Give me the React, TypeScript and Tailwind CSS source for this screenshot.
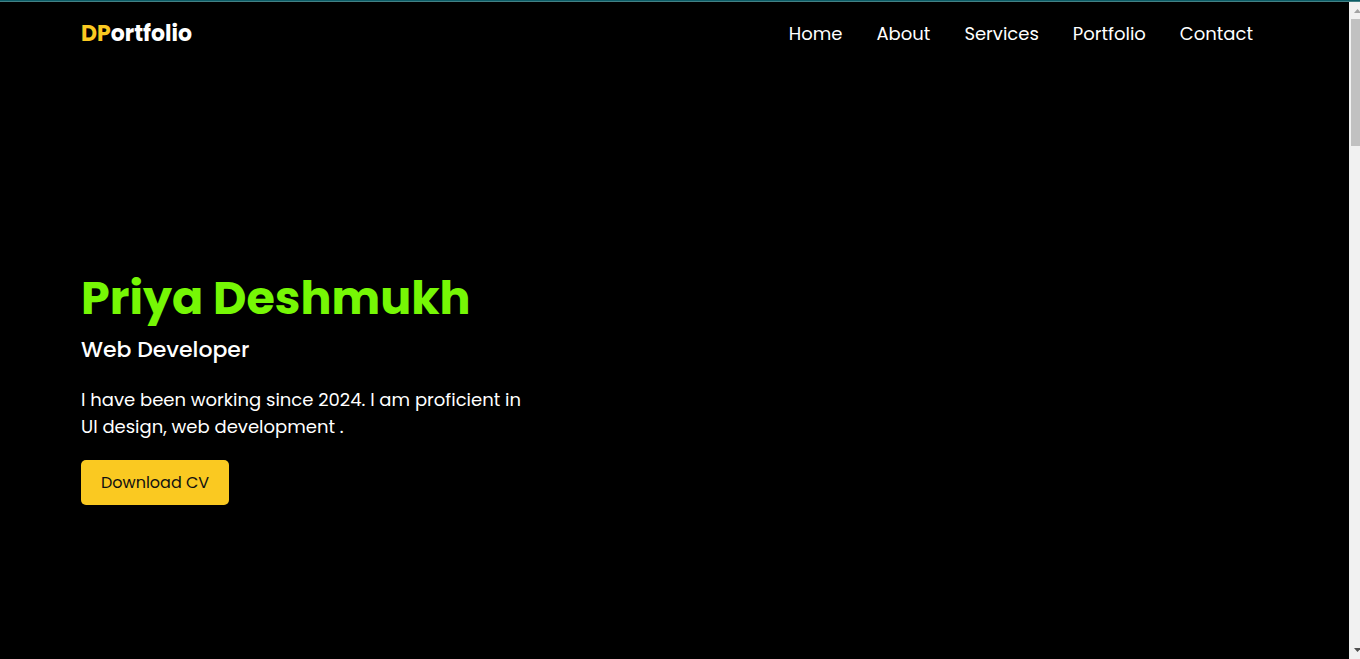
const links = ['Home', 'About', 'Services', 'Portfolio', 'Contact'];

export default function App() {
  return (
    <div className="flex h-screen flex-col overflow-hidden bg-black font-['Poppins','Inter',sans-serif] text-white">
      <div className="h-0.5 shrink-0 border-b border-[#438084] bg-[#0b5c66]" />
      <div className="flex min-h-0 flex-1">
        <div className="flex min-w-0 flex-1 flex-col">
          <header className="flex items-center justify-between pt-4 pr-24 pl-[81px]">
            <a href="#home" className="text-[22px] leading-8 font-bold">
              <span className="text-[#fac921]">DP</span>ortfolio
            </a>
            <nav className="flex gap-[34px] text-lg leading-8">
              {links.map((label) => (
                <a key={label} href={`#${label.toLowerCase()}`}>{label}</a>
              ))}
            </nav>
          </header>
          <main className="flex flex-1 flex-col items-start justify-center pt-[58px] pl-[81px]">
            <h1 className="text-[46px] leading-[72px] font-bold text-[#76f705]">Priya Deshmukh</h1>
            <h2 className="text-[22px] leading-8 font-medium">Web Developer</h2>
            <p className="mt-5 max-w-[450px] text-lg leading-[27px]">
              I have been working since 2024. I am proficient in UI design, web development .
            </p>
            <button type="button" className="mt-5 h-[45px] rounded-[5px] bg-[#fac921] px-5 text-base text-[#111111]">
              Download CV
            </button>
          </main>
        </div>
        <div className="flex w-[11px] shrink-0 flex-col overflow-hidden bg-[#f1f1f1] pb-1" aria-hidden="true">
          <svg className="h-[17px] w-[11px] shrink-0" viewBox="0 0 11 17">
            <path d="M5 11L8.5 7L12 11Z" fill="#a3a3a3" />
          </svg>
          <div className="ml-0.5 h-[127px] shrink-0 bg-[#c1c1c1]" />
          <svg className="mt-auto h-[11px] w-[11px] shrink-0" viewBox="0 0 11 11">
            <path d="M5 4L8.5 8L12 4Z" fill="#505050" />
          </svg>
        </div>
      </div>
    </div>
  );
}
